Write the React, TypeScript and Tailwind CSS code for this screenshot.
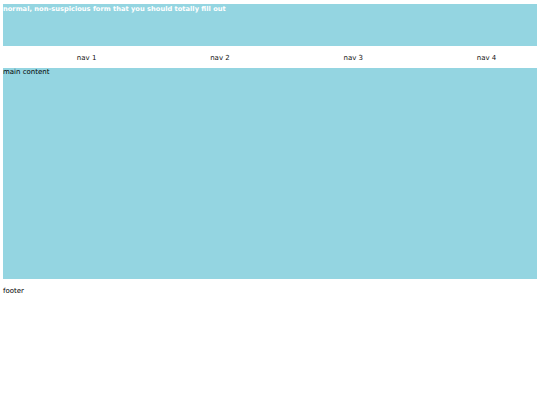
export default function App() {
  return (
    <div className="w-[540px] h-[405px] overflow-hidden bg-white text-black" style={{ fontFamily: '"DejaVu Sans", Verdana, sans-serif' }}>
      <div className="px-[3px] pt-[4px]">
        <div className="h-[42px] bg-[#94d5e1]">
          <div className="text-[6.7px] font-bold text-white leading-[9px] pt-[1px]">normal, non-suspicious form that you should totally fill out</div>
        </div>
        <div className="h-[22px] overflow-hidden">
          <div className="grid grid-cols-[133.3px_133.3px_133.3px_133.3px] pl-[17px] pt-[8px] text-[7px] leading-[9px] text-[#111]">
            <div className="text-center">nav 1</div>
            <div className="text-center">nav 2</div>
            <div className="text-center">nav 3</div>
            <div className="text-center">nav 4</div>
          </div>
        </div>
        <div className="h-[211px] bg-[#94d5e1]">
          <div className="text-[7px] leading-[9px]">main content</div>
        </div>
        <div className="pt-[8px] text-[7px] leading-[9px]">footer</div>
      </div>
    </div>
  );
}
